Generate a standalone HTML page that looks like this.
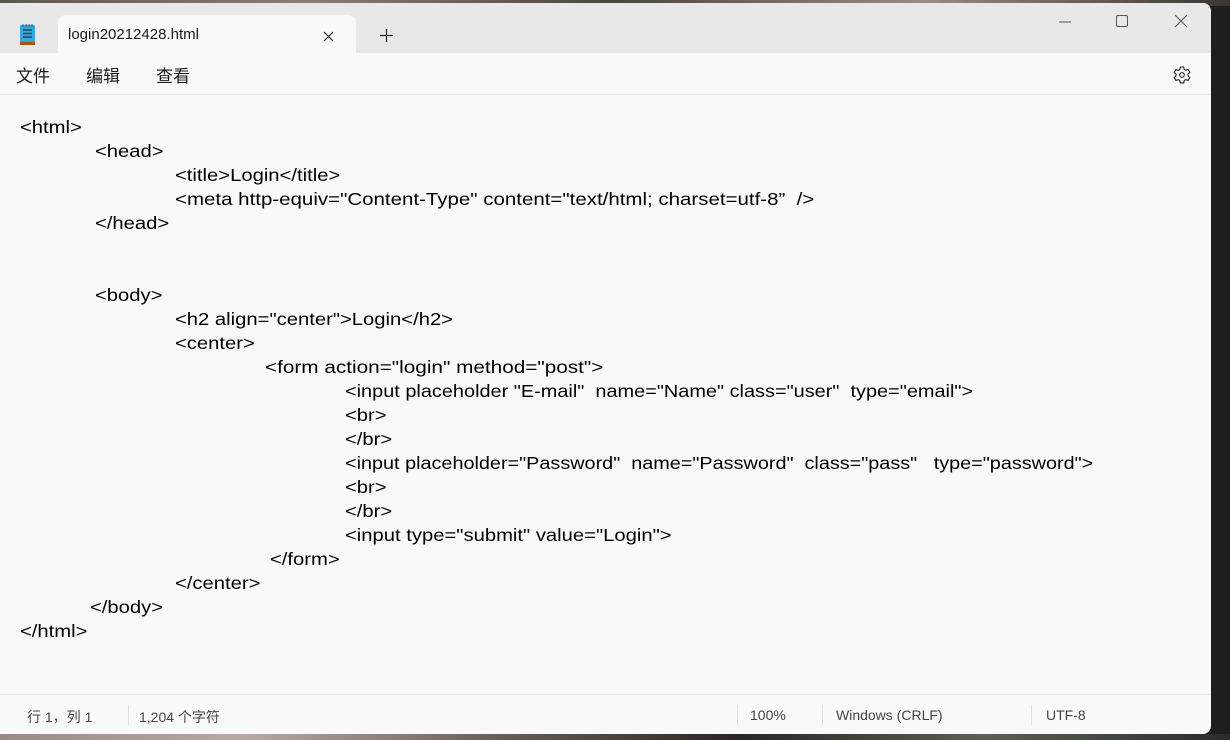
<!DOCTYPE html>
<html><head><meta charset="utf-8"><style>
*{margin:0;padding:0;box-sizing:border-box}
body{width:1230px;height:740px;overflow:hidden;background:#1e1f1c;font-family:"Liberation Sans","Noto Sans CJK SC",sans-serif;position:relative}
.bgtop{position:absolute;left:0;top:0;width:1230px;height:6px;background:linear-gradient(90deg,#5b5650,#8a7e72,#4a4640,#9a8c80,#3a3632)}
.bgbot{position:absolute;left:0;top:734px;width:1230px;height:6px;background:linear-gradient(90deg,#9a8a88,#b8a9a8,#6b5f5c,#2a2624,#5a6058,#2a2e2a)}
.win{position:absolute;left:0;top:3px;width:1211px;height:731px;background:#f9f9f9;border-radius:0 8px 8px 0;overflow:hidden}
.tb{position:absolute;left:0;top:0;width:1211px;height:50px;background:#e8e8e8}
.tab{position:absolute;left:58px;top:12px;width:298px;height:42px;background:#f9f9f9;border-radius:8px 8px 0 0}
.tab span{position:absolute;left:10px;top:11px;font-size:15px;color:#1a1a1a}
.menu{position:absolute;top:59px;font-size:17px;color:#1a1a1a}
.code{position:absolute;top:0;left:0;font-size:17.3px;color:#000;white-space:pre}
.code div{position:absolute;height:24px;line-height:24px;transform-origin:0 50%;transform:scaleX(1.17)}
.status{position:absolute;top:691px;left:0;width:1211px;height:40px;border-top:1px solid #e5e5e5;font-size:14px;color:#444}
.status span{position:absolute;top:12px}
.sep{position:absolute;top:10px;width:1px;height:20px;background:#e0e0e0}
.hr{position:absolute;left:0;top:91px;width:1211px;height:1px;background:#e8e8e8}
</style></head><body>
<div class="bgtop"></div><div class="bgbot"></div>
<div class="win">
<div class="tb"></div>
<svg style="position:absolute;left:19px;top:20px" width="18" height="24" viewBox="0 0 18 24"><rect x="1" y="2" width="15" height="19" rx="1.5" fill="#3aa6d8"/><rect x="1" y="19" width="15" height="3" fill="#a5521c"/><path d="M4 7h9M4 10.5h9M4 14h9" stroke="#114a6a" stroke-width="1.5"/><path d="M4 1v3M7 1v3M10 1v3M13 1v3" stroke="#1c5f84" stroke-width="1"/></svg>
<div class="tab"><span>login20212428.html</span>
<svg style="position:absolute;left:265px;top:16px" width="11" height="11"><path d="M1 1L10 10M10 1L1 10" stroke="#222" stroke-width="1.2"/></svg></div>
<svg style="position:absolute;left:380px;top:26px" width="13" height="13"><path d="M6.5 0V13M0 6.5H13" stroke="#222" stroke-width="1.2"/></svg>
<svg style="position:absolute;left:1058px;top:17px" width="14" height="4"><path d="M1 2H13" stroke="#555" stroke-width="1"/></svg>
<svg style="position:absolute;left:1115px;top:11px" width="14" height="14"><rect x="1.5" y="1.5" width="11" height="11" rx="1.5" fill="none" stroke="#555" stroke-width="1"/></svg>
<svg style="position:absolute;left:1174px;top:11px" width="14" height="14"><path d="M1 1L13 13M13 1L1 13" stroke="#555" stroke-width="1"/></svg>
<svg style="position:absolute;left:1172px;top:62px" width="20" height="20" viewBox="0 0 20 20"><path d="M8.3 2h3.4l.5 2.4 1.6.9 2.3-.8 1.7 2.9-1.8 1.6v1.9l1.8 1.6-1.7 2.9-2.3-.8-1.6.9-.5 2.4H8.3l-.5-2.4-1.6-.9-2.3.8-1.7-2.9L4 11V9.1L2.2 7.5l1.7-2.9 2.3.8 1.6-.9z" fill="none" stroke="#222" stroke-width="1.1"/><circle cx="10" cy="10" r="2.3" fill="none" stroke="#222" stroke-width="1.1"/></svg>
<div class="menu" style="left:16px">文件</div>
<div class="menu" style="left:86px">编辑</div>
<div class="menu" style="left:156px">查看</div>
<div class="hr"></div>
<div class="code">
<div style="left:20px;top:112px">&lt;html&gt;</div>
<div style="left:95px;top:136px">&lt;head&gt;</div>
<div style="left:175px;top:160px">&lt;title&gt;Login&lt;/title&gt;</div>
<div style="left:175px;top:184px;transform:scaleX(1.185)">&lt;meta http-equiv="Content-Type" content="text/html; charset=utf-8”  /&gt;</div>
<div style="left:95px;top:208px">&lt;/head&gt;</div>
<div style="left:95px;top:280px">&lt;body&gt;</div>
<div style="left:175px;top:304px">&lt;h2 align="center"&gt;Login&lt;/h2&gt;</div>
<div style="left:175px;top:328px">&lt;center&gt;</div>
<div style="left:265px;top:352px;transform:scaleX(1.2)">&lt;form action="login" method="post"&gt;</div>
<div style="left:345px;top:376px;transform:scaleX(1.152)">&lt;input placeholder "E-mail"  name="Name" class="user"  type="email"&gt;</div>
<div style="left:345px;top:400px">&lt;br&gt;</div>
<div style="left:345px;top:424px">&lt;/br&gt;</div>
<div style="left:345px;top:448px;transform:scaleX(1.147)">&lt;input placeholder="Password"  name="Password"  class="pass"   type="password"&gt;</div>
<div style="left:345px;top:472px">&lt;br&gt;</div>
<div style="left:345px;top:496px">&lt;/br&gt;</div>
<div style="left:345px;top:520px">&lt;input type="submit" value="Login"&gt;</div>
<div style="left:270px;top:544px">&lt;/form&gt;</div>
<div style="left:175px;top:568px">&lt;/center&gt;</div>
<div style="left:90px;top:592px">&lt;/body&gt;</div>
<div style="left:20px;top:616px">&lt;/html&gt;</div>
</div>
<div class="status">
<span style="left:27px">行 1，列 1</span><div class="sep" style="left:128px"></div>
<span style="left:139px">1,204 个字符</span>
<div class="sep" style="left:737px"></div><span style="left:750px">100%</span>
<div class="sep" style="left:822px"></div><span style="left:836px">Windows (CRLF)</span>
<div class="sep" style="left:1031px"></div><span style="left:1046px">UTF-8</span>
</div>
</div>
</body></html>
